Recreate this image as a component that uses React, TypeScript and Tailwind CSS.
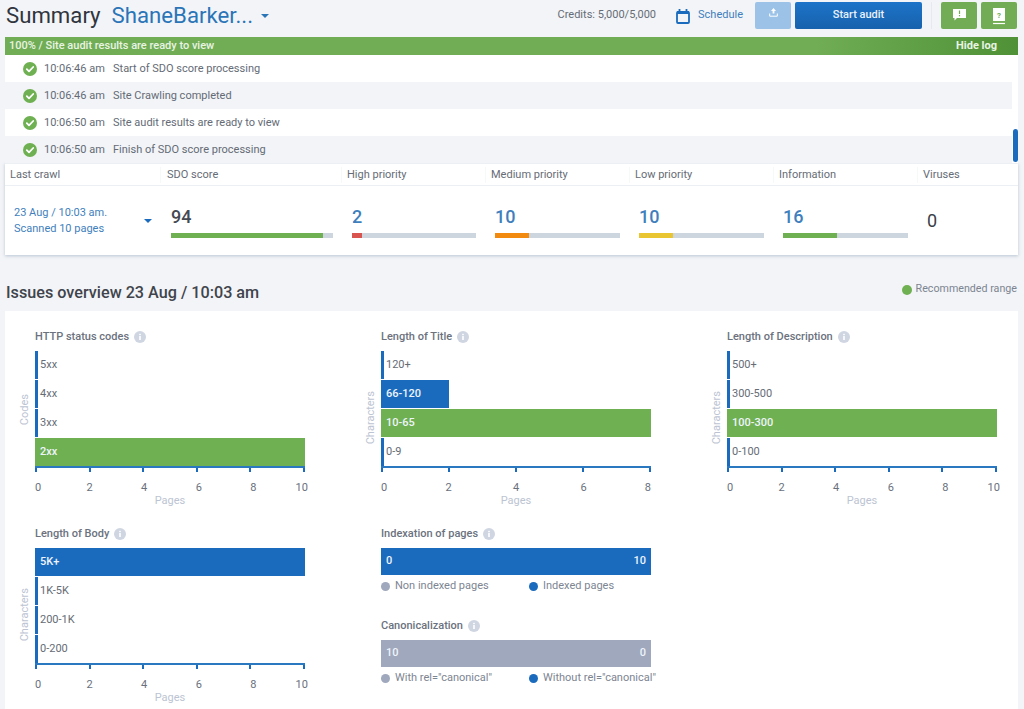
import { ReactNode } from "react";

const LOG = [
  { time: "10:06:46 am", text: "Start of SDO score processing" },
  { time: "10:06:46 am", text: "Site Crawling completed" },
  { time: "10:06:50 am", text: "Site audit results are ready to view" },
  { time: "10:06:50 am", text: "Finish of SDO score processing" },
];

const STATS = [
  { label: "High priority", value: "2", pct: 8, color: "bg-[#d9534f]" },
  { label: "Medium priority", value: "10", pct: 27, color: "bg-[#f28a0f]" },
  { label: "Low priority", value: "10", pct: 27, color: "bg-[#e8c531]" },
  { label: "Information", value: "16", pct: 43, color: "bg-[#6fb052]" },
];

type Row = { label: string; value: number; color?: string };

function CheckIcon() {
  return (
    <svg width="14" height="14" viewBox="0 0 14 14" className="shrink-0">
      <circle cx="7" cy="7" r="7" fill="#6fb052" />
      <path d="M3.8 7.2l2.2 2.2 4.2-4.4" fill="none" stroke="#fff" strokeWidth="1.8" strokeLinecap="round" strokeLinejoin="round" />
    </svg>
  );
}

function InfoIcon() {
  return (
    <svg width="12" height="12" viewBox="0 0 12 12" className="shrink-0">
      <circle cx="6" cy="6" r="6" fill="#cfd6e2" />
      <rect x="5.2" y="5" width="1.6" height="4" fill="#fff" />
      <rect x="5.2" y="2.8" width="1.6" height="1.4" fill="#fff" />
    </svg>
  );
}

function Caret({ className }: { className: string }) {
  return (
    <svg width="8" height="4" viewBox="0 0 8 4" className={className}>
      <path d="M0 0h8L4 4z" fill="currentColor" />
    </svg>
  );
}

function Title({ children }: { children: ReactNode }) {
  return (
    <div className="flex h-[15px] items-center gap-[5px] text-[11px] font-medium leading-none text-[#6b727e]">
      <span>{children}</span>
      <InfoIcon />
    </div>
  );
}

function Chart({ title, axis, rows, ticks }: { title: string; axis: string; rows: Row[]; ticks: number[] }) {
  const max = ticks[ticks.length - 1];
  return (
    <div className="w-[270px]">
      <Title>{title}</Title>
      <div className="-ml-[17px] mt-[7px] flex">
        <div className={`flex w-[17px] items-center pl-px ${axis === "Codes" ? "pt-[3px]" : "pt-[18px]"}`}>
          <span className="rotate-180 text-[11px] leading-none text-[#bcc4d2] [writing-mode:vertical-rl]">{axis}</span>
        </div>
        <div className="flex w-[270px] flex-col gap-px">
          {rows.map((row) => (
            <div key={row.label} className="h-[28px]">
              {row.value > 0 ? (
                <div
                  className={`flex h-full items-center whitespace-nowrap pl-[5px] text-[11px] font-medium text-[#eef4fb] ${row.color ?? "bg-[#1a6bbd]"}`}
                  style={{ width: `${(row.value / max) * 100}%` }}
                >
                  {row.label}
                </div>
              ) : (
                <div className="flex h-full items-center border-l-[3px] border-[#1a6bbd] pl-[2px] text-[11px] text-[#666c76]">
                  {row.label}
                </div>
              )}
            </div>
          ))}
        </div>
      </div>
      <div className="flex h-[6px] justify-between border-t-2 border-[#2a78c0]">
        {ticks.map((t) => (
          <span key={t} className="h-[4px] w-[2px] bg-[#1a6bbd]" />
        ))}
      </div>
      <div className="mt-[9px] flex justify-between text-[11px] leading-[13px] text-[#6a717d]">
        {ticks.map((t, i) => (
          <span
            key={t}
            className={`flex w-0 ${i === 0 ? "justify-start" : i === ticks.length - 1 ? "justify-end" : "justify-center"} ${t >= 10 ? "-mr-[3px]" : ""}`}
          >
            {t}
          </span>
        ))}
      </div>
      <div className="text-center text-[11px] leading-[13px] text-[#bcc4d2]">Pages</div>
    </div>
  );
}

function Split({ title, left, right, color, leftLabel, rightLabel }: { title: string; left: string; right: string; color: string; leftLabel: string; rightLabel: string }) {
  return (
    <div className="w-[270px]">
      <Title>{title}</Title>
      <div className={`mt-[7px] flex h-[27px] items-center justify-between px-[5px] text-[11px] font-medium text-[#eef4fb] ${color}`}>
        <span>{left}</span>
        <span>{right}</span>
      </div>
      <div className="mt-[3px] flex h-[16px] items-center whitespace-nowrap text-[11px] text-[#7d8592]">
        <span className="flex w-[148px] shrink-0 items-center gap-[5px]">
          <span className="h-[9px] w-[9px] rounded-full bg-[#9fa8bc]" />
          {leftLabel}
        </span>
        <span className="flex items-center gap-[5px]">
          <span className="h-[9px] w-[9px] rounded-full bg-[#1a6bbd]" />
          {rightLabel}
        </span>
      </div>
    </div>
  );
}

export default function App() {
  return (
    <div className="h-[709px] w-[1024px] overflow-hidden bg-[#f2f4f7] pl-[5px] pr-[6px] font-['Roboto',sans-serif]">
      {/* top bar */}
      <div className="mr-px flex h-[37px] items-center pb-[6px] pl-px">
        <span className="-mt-px text-[22.2px] leading-none text-[#30353d]">Summary</span>
        <span className="-mt-px ml-[11px] text-[22.2px] leading-none text-[#2a74b8]">ShaneBarker...</span>
        <Caret className="ml-[8px] text-[#2a74b8]" />
        <span className="ml-auto text-[11px] text-[#666c76]">Credits: 5,000/5,000</span>
        <svg width="14" height="16" viewBox="0 0 14 16" className="ml-[20px]">
          <rect x="1" y="4" width="12" height="11" rx="1" fill="none" stroke="#1a6bbd" strokeWidth="1.8" />
          <path d="M1 3h12v3H1z" fill="#1a6bbd" />
          <path d="M3.5 1v3M10.5 1v3" stroke="#1a6bbd" strokeWidth="1.8" />
        </svg>
        <span className="ml-[8px] text-[11px] text-[#3f7fbd]">Schedule</span>
        <div className="ml-[12px] flex h-[27px] w-[36px] items-start justify-center rounded-[2px] bg-[#9cc2e8] pt-[6px]">
          <svg width="9" height="9" viewBox="0 0 9 9">
            <path d="M4.5 0L2 3h1.6v2.5h1.8V3H7z" fill="#fff" />
            <path d="M0.7 5.5v2.7h7.6V5.5" fill="none" stroke="#fff" strokeWidth="1" />
          </svg>
        </div>
        <button className="ml-[4px] h-[27px] w-[127px] rounded-[2px] bg-gradient-to-b from-[#1c73c8] to-[#1862ad] text-[11px] font-medium text-[#e8f1fa]">
          Start audit
        </button>
        <div className="ml-[9px] h-[27px] w-px bg-[#e6e9ee]" />
        <div className="ml-[9px] flex h-[27px] w-[36px] items-start justify-center rounded-[2px] bg-[#72ad55] pt-[7px]">
          <svg width="13" height="12" viewBox="0 0 13 12">
            <path d="M0 0h13v9H4L1.5 11.5V9H0z" fill="#fff" />
            <path d="M6.5 1.5v3.6M6.5 6v1.2" stroke="#72ad55" strokeWidth="1.2" />
          </svg>
        </div>
        <div className="ml-[4px] flex h-[27px] w-[36px] items-start justify-center rounded-[2px] bg-[#72ad55] pt-[6px]">
          <svg width="12" height="17" viewBox="0 0 12 17">
            <path d="M0 0h12v13H0z" fill="#fff" />
            <path d="M0 15.5h12" stroke="#fff" strokeWidth="1.2" />
            <text x="6" y="10" textAnchor="middle" fontSize="8" fontWeight="700" fill="#72ad55" fontFamily="Roboto, sans-serif">?</text>
          </svg>
        </div>
      </div>

      {/* progress bar */}
      <div className="flex h-[18px] items-center justify-between bg-gradient-to-r from-[#70ad55] from-80% to-[#4f9136] pl-[4px] pr-[21px] text-[11px] font-medium text-[#e9f4e3]">
        <span>100% / Site audit results are ready to view</span>
        <span className="font-bold">Hide log</span>
      </div>

      {/* log */}
      <div className="relative bg-white pr-[6px]">
        {LOG.map((row, i) => (
          <div key={i} className={`flex h-[27px] items-center pl-[18px] pt-px text-[11px] text-[#646b76] ${i % 2 === 1 ? "bg-[#f2f4f7]" : "bg-white"}`}>
            <CheckIcon />
            <span className="ml-[7px] w-[69px]">{row.time}</span>
            <span>{row.text}</span>
          </div>
        ))}
        <div className="absolute bottom-px right-0 h-[33px] w-[5px] rounded-full bg-[#1a6bbd]" />
      </div>

      {/* summary table */}
      <div className="h-[92px] bg-white shadow-[0_1px_3px_rgba(120,140,170,0.45)]">
        <div className="flex h-[23px] items-center border-y border-[#eceff3] pt-px text-[11px] text-[#666c76]">
          <span className="w-[156px] border-r border-[#f7f8fa] pl-[5px]">Last crawl</span>
          <span className="w-[181px] border-r border-[#f7f8fa] pl-[6px]">SDO score</span>
          {STATS.map((s) => (
            <span key={s.label} className="w-[144px] border-r border-[#f7f8fa] pl-[5px]">{s.label}</span>
          ))}
          <span className="pl-[5px]">Viruses</span>
        </div>
        <div className="flex h-[69px]">
          <div className="flex w-[156px] items-center pl-[9px] pr-[9px]">
            <div className="text-[11px] leading-[16px] text-[#3f7fbd]">
              <div>23 Aug / 10:03 am.</div>
              <div>Scanned 10 pages</div>
            </div>
            <Caret className="ml-auto text-[#1a6bbd]" />
          </div>
          <div className="w-[181px] pl-[10px] pr-[9px] pt-[20px]">
            <div className="h-[27px] text-[18px] font-medium leading-[22px] text-[#454a52]">94</div>
            <div className="h-[5px] bg-[#cdd5df]">
              <div className="h-full w-[94%] bg-[#6fb052]" />
            </div>
          </div>
          {STATS.map((s, i) => (
            <div key={s.label} className={`w-[144px] pr-[10px] pt-[20px] ${i === 0 ? "pl-[10px]" : "pl-[9px]"}`}>
              <div className="h-[27px] text-[18px] font-medium leading-[22px] text-[#3f7fbd]">{s.value}</div>
              <div className="h-[5px] bg-[#cdd5df]">
                <div className={`h-full ${s.color}`} style={{ width: `${s.pct}%` }} />
              </div>
            </div>
          ))}
          <div className="pl-[9px] pt-[24px] text-[18px] leading-[22px] text-[#3a3f47]">0</div>
        </div>
      </div>

      {/* issues heading */}
      <div className="flex h-[56px] items-end justify-between pl-px pr-px">
        <span className="pb-[10px] text-[16.2px] font-medium leading-none text-[#3f444c]">Issues overview 23 Aug / 10:03 am</span>
        <span className="flex items-center gap-[4px] pb-[16px] text-[10.7px] leading-none text-[#7d8592]">
          <span className="h-[10px] w-[10px] rounded-full bg-[#6fb052]" />
          Recommended range
        </span>
      </div>

      {/* charts */}
      <div className="grid h-[398px] grid-cols-[346px_346px_270px] grid-rows-[197px_auto] bg-white pl-[30px] pt-[18px]">
        <Chart
          title="HTTP status codes"
          axis="Codes"
          ticks={[0, 2, 4, 6, 8, 10]}
          rows={[
            { label: "5xx", value: 0 },
            { label: "4xx", value: 0 },
            { label: "3xx", value: 0 },
            { label: "2xx", value: 10, color: "bg-[#6fb052]" },
          ]}
        />
        <Chart
          title="Length of Title"
          axis="Characters"
          ticks={[0, 2, 4, 6, 8]}
          rows={[
            { label: "120+", value: 0 },
            { label: "66-120", value: 2 },
            { label: "10-65", value: 8, color: "bg-[#6fb052]" },
            { label: "0-9", value: 0 },
          ]}
        />
        <Chart
          title="Length of Description"
          axis="Characters"
          ticks={[0, 2, 4, 6, 8, 10]}
          rows={[
            { label: "500+", value: 0 },
            { label: "300-500", value: 0 },
            { label: "100-300", value: 10, color: "bg-[#6fb052]" },
            { label: "0-100", value: 0 },
          ]}
        />
        <Chart
          title="Length of Body"
          axis="Characters"
          ticks={[0, 2, 4, 6, 8, 10]}
          rows={[
            { label: "5K+", value: 10 },
            { label: "1K-5K", value: 0 },
            { label: "200-1K", value: 0 },
            { label: "0-200", value: 0 },
          ]}
        />
        <div className="flex flex-col gap-[24px]">
          <Split title="Indexation of pages" left="0" right="10" color="bg-[#1a6bbd]" leftLabel="Non indexed pages" rightLabel="Indexed pages" />
          <Split title="Canonicalization" left="10" right="0" color="bg-[#9fa8bc]" leftLabel='With rel="canonical"' rightLabel='Without rel="canonical"' />
        </div>
      </div>
    </div>
  );
}
